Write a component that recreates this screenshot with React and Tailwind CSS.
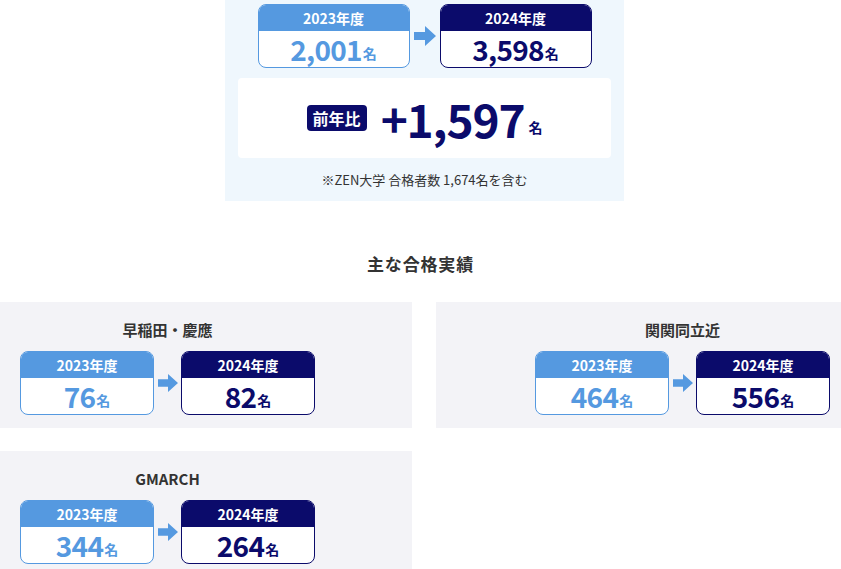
const font = { fontFamily: '"Noto Sans CJK JP", "Noto Sans", sans-serif' };

function Arrow({ w = 22 }) {
  return (
    <svg width={w} height="20" viewBox="0 0 22 20" className="shrink-0">
      <path d="M0 6h11V0l11 10-11 10v-6H0z" fill="#5599e0" />
    </svg>
  );
}

function YearBox({ year, value, dark, big }) {
  const border = dark ? "border-[#0b0b6b]" : "border-[#5599e0]";
  const head = dark ? "bg-[#0b0b6b]" : "bg-[#5599e0]";
  const color = dark ? "text-[#0b0b6b]" : "text-[#5599e0]";
  return (
    <div className={`flex flex-col rounded-lg border overflow-hidden bg-white h-[64px] ${border} ${big ? "w-[152px]" : "w-[134px]"}`}>
      <div className={`${head} text-white text-[14px] font-bold h-[26px] flex items-center justify-center`}>{year}</div>
      <div className={`flex-1 flex items-center justify-center ${color}`}>
        <span className="text-[28px] font-bold leading-[32px] tracking-tight">{value}</span>
        <span className="text-[14px] font-bold leading-none self-end mb-[7px] ml-[1px]">名</span>
      </div>
    </div>
  );
}

function Card({ title, a, b, pl }) {
  return (
    <div className="bg-[#f3f3f7] h-[126px] pt-[17px]">
      <div className={`w-[295px] ${pl}`}>
        <div className="text-center text-[15px] font-bold text-[#333] mb-[10px]">{title}</div>
        <div className="flex items-center justify-between">
          <YearBox year="2023年度" value={a} />
          <Arrow w={20} />
          <YearBox year="2024年度" value={b} dark />
        </div>
      </div>
    </div>
  );
}

export default function App() {
  return (
    <div className="w-[841px] h-[569px] overflow-hidden bg-white" style={font}>
      <div className="ml-[225px] w-[399px] h-[201px] bg-[#eff7fd] pt-[4px] px-[13px]">
        <div className="flex items-center justify-center gap-[4px]">
          <YearBox year="2023年度" value="2,001" big />
          <Arrow />
          <YearBox year="2024年度" value="3,598" dark big />
        </div>
        <div className="mt-[10px] bg-white rounded h-[80px] flex items-center justify-center text-[#0b0b6b]">
          <span className="bg-[#0b0b6b] text-white text-[16px] font-bold rounded px-[6px] py-[1px] mr-[14px]">前年比</span>
          <span className="text-[46px] font-bold leading-none tracking-tight">+1,597</span>
          <span className="text-[14px] font-bold self-end mb-[20px] ml-[4px]">名</span>
        </div>
        <div className="text-center text-[13px] text-[#333] mt-[12px]">※ZEN大学 合格者数 1,674名を含む</div>
      </div>
      <div className="text-center text-[17px] font-bold text-[#333] tracking-wider mt-[50px] mb-[25px]">主な合格実績</div>
      <div className="grid grid-cols-[412px_405px] gap-x-[24px] gap-y-[23px]">
        <Card title="早稲田・慶應" a="76" b="82" pl="ml-[20px]" />
        <Card title="関関同立近" a="464" b="556" pl="ml-[99px]" />
        <Card title="GMARCH" a="344" b="264" pl="ml-[20px]" />
      </div>
    </div>
  );
}
